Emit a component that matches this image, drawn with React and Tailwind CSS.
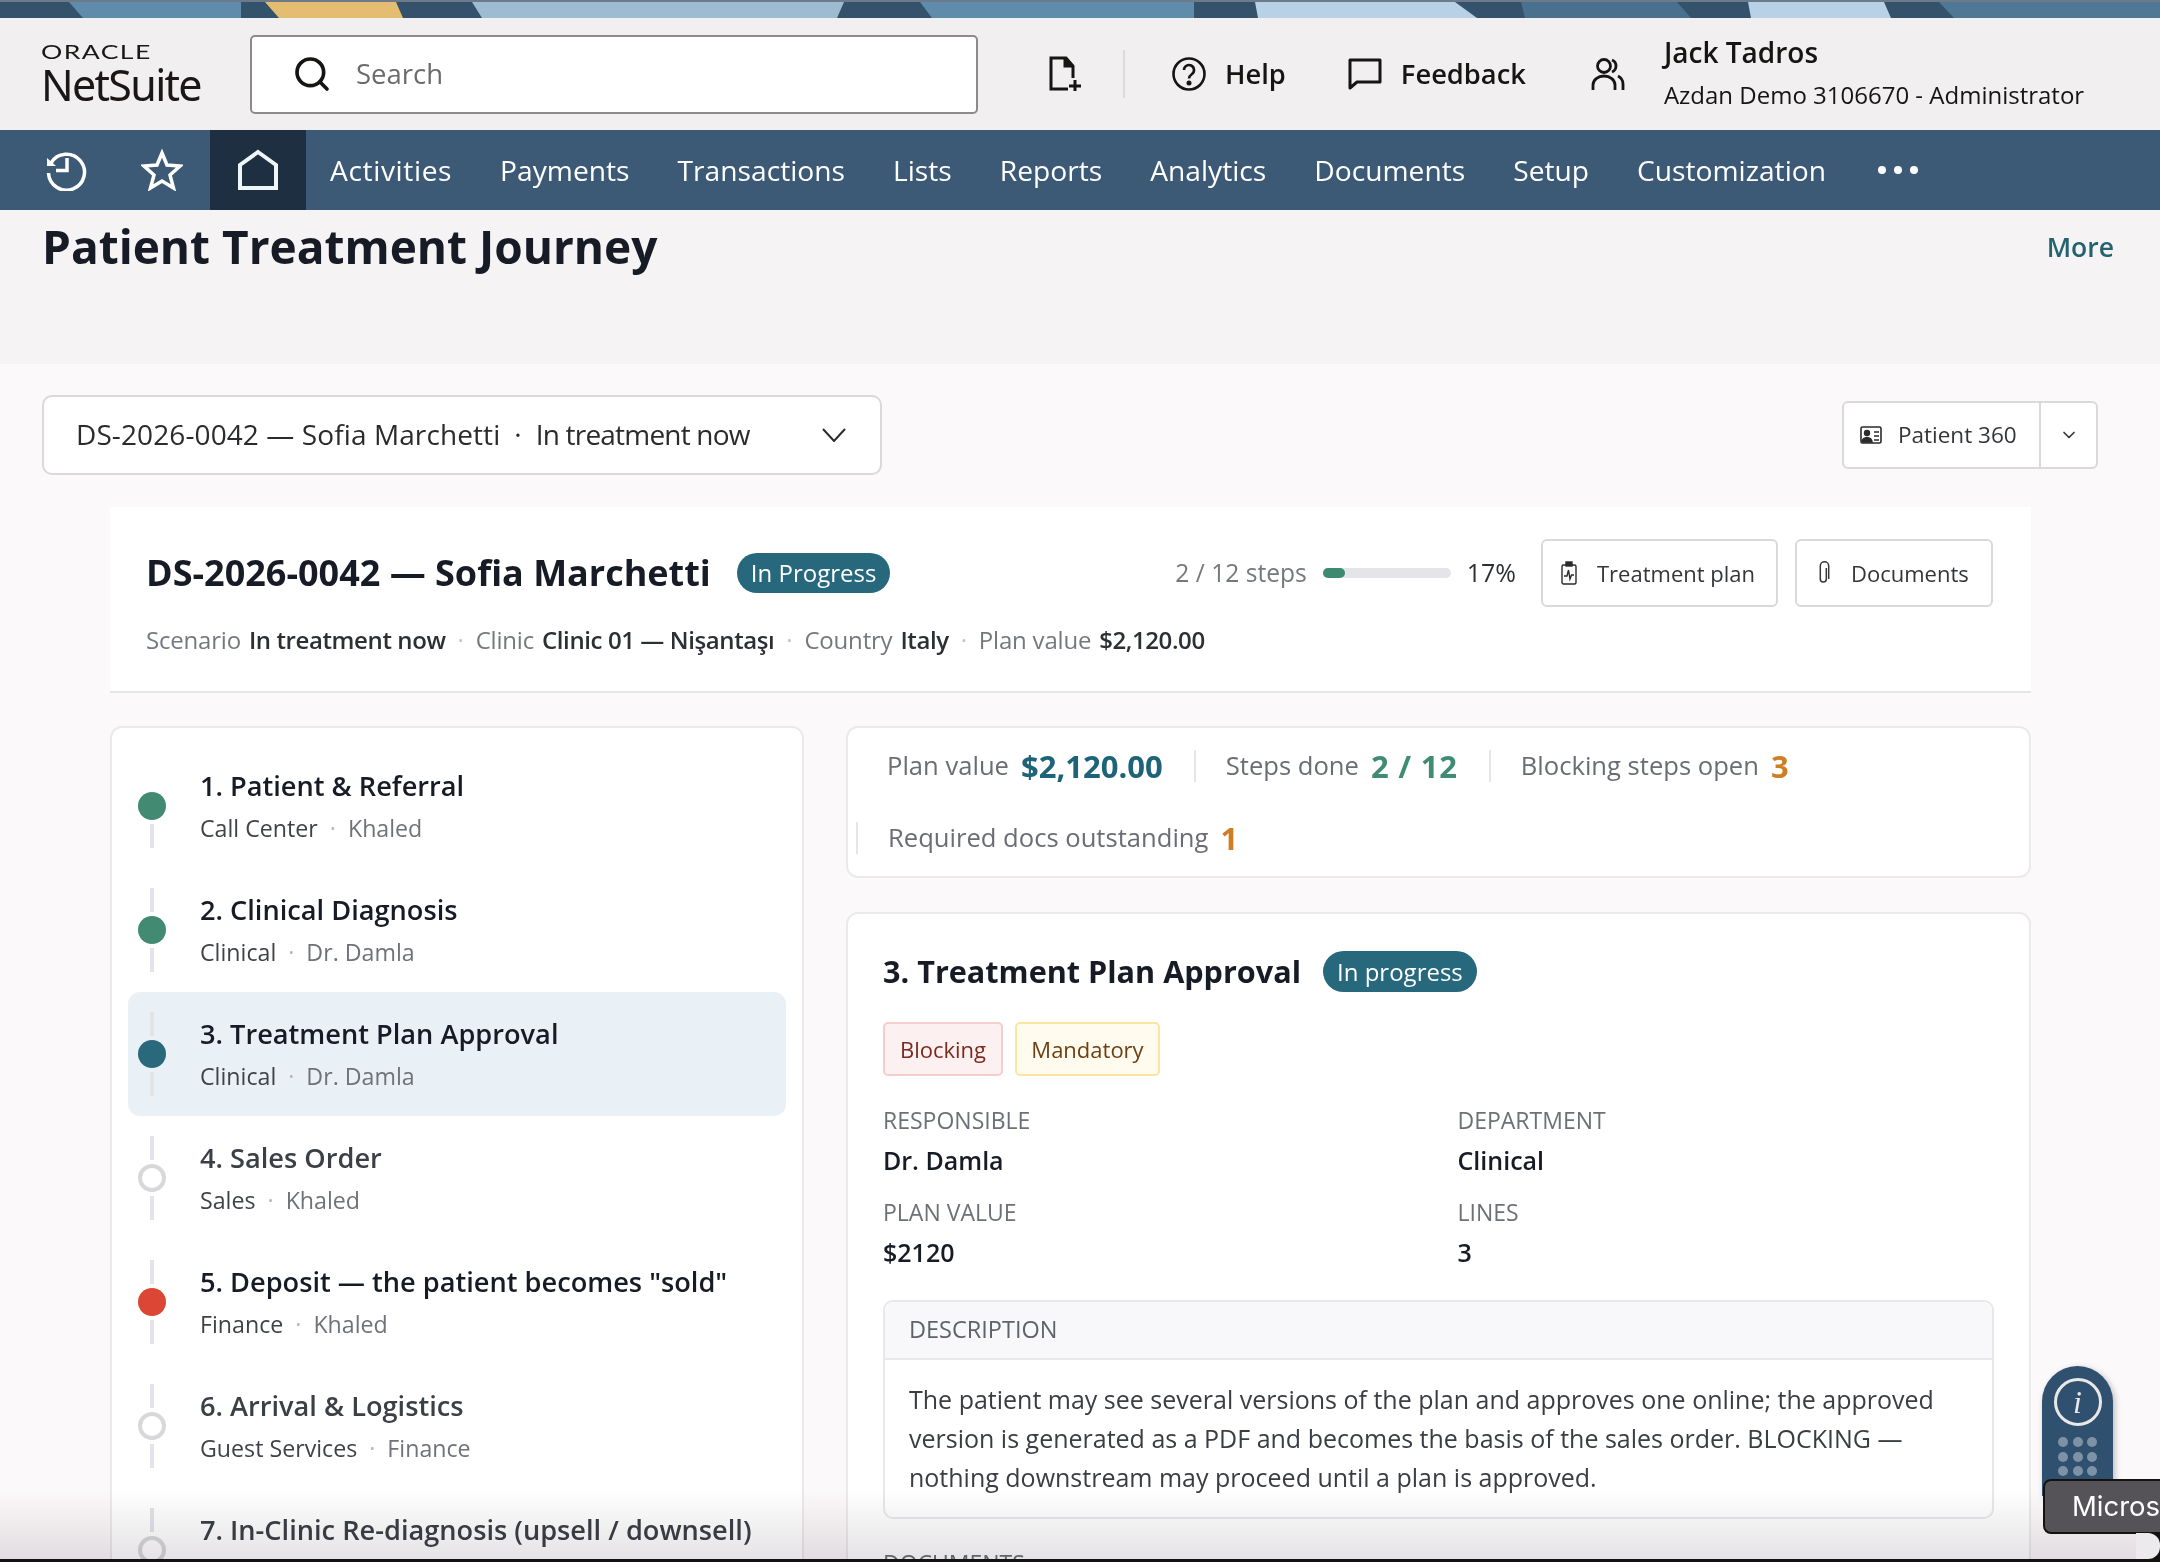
import React from 'react';
import { ChevronDown, Search } from 'lucide-react';

const navItems = ['Activities', 'Payments', 'Transactions', 'Lists', 'Reports', 'Analytics', 'Documents', 'Setup', 'Customization'];

const steps = [
    { title: '1. Patient & Referral', dept: 'Call Center', owner: 'Khaled', state: 'done' },
    { title: '2. Clinical Diagnosis', dept: 'Clinical', owner: 'Dr. Damla', state: 'done' },
    { title: '3. Treatment Plan Approval', dept: 'Clinical', owner: 'Dr. Damla', state: 'current' },
    { title: '4. Sales Order', dept: 'Sales', owner: 'Khaled', state: 'todo' },
    { title: '5. Deposit — the patient becomes "sold"', dept: 'Finance', owner: 'Khaled', state: 'blocked' },
    { title: '6. Arrival & Logistics', dept: 'Guest Services', owner: 'Finance', state: 'todo' },
    { title: '7. In-Clinic Re-diagnosis (upsell / downsell)', dept: 'Clinical', owner: 'Dr. Damla', state: 'todo' },
];

const dotClass = {
    done: 'bg-[#438a72]',
    current: 'bg-[#2a687c]',
    blocked: 'bg-[#dc4635]',
    todo: 'bg-white border-[4px] border-[#d8d8da]',
};

// decorative band above the header
function TopStrip() {
    return (
        <svg className="block w-full h-[18px]" viewBox="0 0 2160 18" preserveAspectRatio="none">
            <rect width="2160" height="18" fill="#34526b" />
            <polygon points="69,2 241,2 241,18 83,18" fill="#5f8cab" />
            <polygon points="265,2 396,2 403,18 279,18" fill="#e4bd72" />
            <polygon points="472,2 844,2 837,18 482,18" fill="#9dbcd2" />
            <polygon points="920,2 1194,2 1194,18 932,18" fill="#5f8cab" />
            <polygon points="1255,2 1455,2 1477,18 1258,18" fill="#b9d1e6" />
            <polygon points="1521,2 1677,2 1691,18 1525,18" fill="#4a7090" />
            <polygon points="1748,2 1884,2 1891,18 1751,18" fill="#b9d1e6" />
            <polygon points="1939,2 2160,2 2160,18 1954,18" fill="#4f7896" />
            <rect width="2160" height="2" fill="#6d7a8a" />
        </svg>
    );
}

function Logo() {
    return (
        <div className="w-[208px] shrink-0 text-[#1a1716]">
            <div className="text-[19px] leading-[16px] font-['Lato',sans-serif] tracking-[1px] scale-x-[1.4] origin-left">ORACLE</div>
            <div className="text-[43px] leading-[40px] mt-[5px] tracking-[-1.7px] font-['Noto_Sans',sans-serif]">NetSuite</div>
        </div>
    );
}

function HistoryIcon() {
    return (
        <svg width="42" height="42" viewBox="0 0 42 42" fill="none" stroke="white" strokeWidth="3.5">
            <path d="M6 14 A18 18 0 1 1 3.5 24" />
            <path d="M2 9 L11 17 L2 17 Z" fill="white" stroke="none" />
            <path d="M22 9 V21.5 H11" />
        </svg>
    );
}

function StarIcon() {
    return (
        <svg width="42" height="42" viewBox="0 0 42 42" fill="none" stroke="white" strokeWidth="3.5">
            <path d="M21 4 L26 16 L39 17 L29 26 L32.5 39 L21 32 L9.5 39 L13 26 L3 17 L16 16 Z" />
        </svg>
    );
}

function HomeIcon() {
    return (
        <svg width="42" height="42" viewBox="0 0 42 42" fill="none" stroke="#eef6fa" strokeWidth="4">
            <path d="M21 3 L39 16 V39 H3 V16 Z" />
        </svg>
    );
}

function NewDocIcon() {
    return (
        <svg width="34" height="36" viewBox="0 0 34 36" fill="none" stroke="#161513" strokeWidth="3">
            <path d="M20 33 H3 V2 H18 L25 10 V22" />
            <path d="M17 2 V10 H25" fill="#161513" />
            <path d="M27 24 V35 M21 30 H33" />
        </svg>
    );
}

function HelpIcon() {
    return (
        <svg width="34" height="34" viewBox="0 0 34 34" fill="none" stroke="#161513" strokeWidth="2.6">
            <circle cx="17" cy="17" r="15.5" />
            <path d="M12 13 a5 5 0 1 1 8 4 c-2 1.5 -3 2.5 -3 4.5" />
            <circle cx="17" cy="26" r="1.2" fill="#161513" />
        </svg>
    );
}

function FeedbackIcon() {
    return (
        <svg width="34" height="32" viewBox="0 0 34 32" fill="none" stroke="#161513" strokeWidth="3">
            <path d="M2 2 H32 V24 H9 L2 30 Z" strokeLinejoin="round" />
        </svg>
    );
}

function UserIcon() {
    return (
        <svg width="34" height="34" viewBox="0 0 34 34" fill="none" stroke="#161513" strokeWidth="2.8">
            <circle cx="13" cy="9" r="6.5" />
            <path d="M2 33 V28 a11 9 0 0 1 22 0 V33" />
            <path d="M21 3 a6.5 6.5 0 0 1 0 12" />
            <path d="M27 19 a9 9 0 0 1 5 8 V33" />
        </svg>
    );
}

function PatientCardIcon() {
    return (
        <svg width="22" height="18" viewBox="0 0 22 18" fill="none" stroke="#2b2b2b" strokeWidth="1.6">
            <rect x="1" y="1" width="20" height="16" rx="1.5" />
            <circle cx="7" cy="7" r="2.4" fill="#2b2b2b" />
            <path d="M2 16 a5 4.5 0 0 1 10 0 Z" fill="#2b2b2b" />
            <path d="M14 6 H19 M14 10 H19 M14 14 H19" />
        </svg>
    );
}

function ClipboardIcon() {
    return (
        <svg width="16" height="24" viewBox="0 0 16 24" fill="none" stroke="#2b2b2b" strokeWidth="1.4">
            <rect x="1" y="4" width="14" height="19" rx="1.5" />
            <rect x="5" y="1" width="6" height="4" fill="#2b2b2b" />
            <path d="M3 15 H6 L7.5 9 L9 18 L10.5 14 H13" />
        </svg>
    );
}

function ClipIcon() {
    return (
        <svg width="12" height="24" viewBox="0 0 12 24" fill="none" stroke="#333538" strokeWidth="1.5">
            <path d="M9 7 V18 a3 3 0 0 1 -6 0 V5 a4.2 4.2 0 0 1 8.4 0 V18" transform="translate(-0.7 0)" />
        </svg>
    );
}

function StepRow({ step, first }) {
    const muted = step.state === 'todo';
    return (
        <div className={`flex h-[124px] pl-[10px] rounded-[12px] ${step.state === 'current' ? 'bg-[#e9f1f7]' : ''}`}>
            <div className="w-[28px] shrink-0 flex flex-col items-center pt-[20px]">
                <div className={`w-[4px] h-[24px] ${first ? 'bg-transparent' : 'bg-[#e3e4e7]'}`} />
                <div className={`w-[28px] h-[28px] rounded-full mt-[4px] shrink-0 ${dotClass[step.state]}`} />
                <div className="w-[4px] h-[24px] mt-[4px] bg-[#e3e4e7]" />
            </div>
            <div className="ml-[34px] pt-[22px]">
                <div className={`text-[27.2px] leading-[40px] font-semibold whitespace-nowrap ${muted ? 'text-[#3b3f46]' : 'text-[#161b26]'}`}>{step.title}</div>
                <div className="mt-[5px] text-[23.2px] leading-[34px] text-[#3f4347] whitespace-nowrap">
                    {step.dept}
                    <span className="text-[#b5b6b8] mx-[12px]">·</span>
                    <span className="text-[#6f7278]">{step.owner}</span>
                </div>
            </div>
        </div>
    );
}

function Kpi({ label, value, color }) {
    return (
        <div className="h-[32px] flex items-center border-l-2 first:border-l-0 border-[#e6e6e8] pl-[30px] first:pl-[31px] pr-[31px]">
            <span className="text-[25.6px] text-[#6a6d73]">{label}</span>
            <span className={`ml-[12px] text-[31px] font-bold ${color}`}>{value}</span>
        </div>
    );
}

function Field({ label, value }) {
    return (
        <div>
            <div className="text-[23px] leading-[32px] text-[#6d7076]">{label}</div>
            <div className="mt-[6px] text-[25px] leading-[36px] font-semibold text-[#161b26]">{value}</div>
        </div>
    );
}

function MetaItem({ label, value, last }) {
    return (
        <>
            <span className="text-[#75787d]">{label}</span>
            <span className="ml-[8px] font-semibold tracking-[-0.4px] text-[#2c2f33]">{value}</span>
            {!last && <span className="text-[#c2c3c5] mx-[12px]">·</span>}
        </>
    );
}

export default function App() {
    return (
        <div className="relative w-[2160px] h-[1562px] overflow-hidden bg-[#fcf9fa] font-['Open_Sans',sans-serif]">
            <TopStrip />

            {/* Header */}
            <header className="h-[112px] bg-[#f1eff0] flex items-center pl-[41px]">
                <Logo />
                <div className="ml-px w-[728px] h-[79px] bg-white border-2 border-[#8c8a8c] rounded-[5px] flex items-center pl-[40px]">
                    <Search size={40} strokeWidth={2.2} className="text-[#161513]" />
                    <span className="ml-[24px] text-[27.5px] text-[#6b6b6d]">Search</span>
                </div>
                <div className="ml-[70px]"><NewDocIcon /></div>
                <div className="ml-[41px] w-[2px] h-[48px] bg-[#dcdadb]" />
                <div className="ml-[47px] flex items-center"><HelpIcon /><span className="ml-[19px] text-[27.3px] font-semibold text-[#161513]">Help</span></div>
                <div className="ml-[62px] flex items-center"><FeedbackIcon /><span className="ml-[19px] text-[27.3px] font-semibold text-[#161513]">Feedback</span></div>
                <div className="ml-[65px]"><UserIcon /></div>
                <div className="ml-[39px] text-[#161513]">
                    <div className="text-[28px] leading-[38px] font-semibold -mt-[3px]">Jack Tadros</div>
                    <div className="mt-[7px] text-[24px] leading-[34px]">Azdan Demo 3106670 - Administrator</div>
                </div>
            </header>

            {/* Nav */}
            <nav className="h-[80px] bg-[#3c5a75] flex items-center pl-[18px]">
                <div className="w-[96px] h-full flex items-center justify-center"><HistoryIcon /></div>
                <div className="w-[96px] h-full flex items-center justify-center"><StarIcon /></div>
                <div className="w-[96px] h-full flex items-center justify-center bg-[#1f2f42]"><HomeIcon /></div>
                <div className="ml-[24px] flex items-center gap-[48px] text-[28.2px] font-medium text-white">
                    {navItems.map((item) => (
                        <span key={item} className="first:tracking-[0.6px]">{item}</span>
                    ))}
                    <span className="flex gap-[8px] ml-[4px]">
                        <span className="w-[8px] h-[8px] rounded-full bg-white" />
                        <span className="w-[8px] h-[8px] rounded-full bg-white" />
                        <span className="w-[8px] h-[8px] rounded-full bg-white" />
                    </span>
                </div>
            </nav>

            {/* Page title */}
            <div className="h-[154px] bg-[#f5f3f3] flex justify-between items-start pl-[42px] pr-[46px] pt-[6px]">
                <h1 className="text-[46px] leading-[60px] font-bold text-[#161b26]">Patient Treatment Journey</h1>
                <a className="text-[26.5px] leading-[62px] font-semibold text-[#23626f]">More</a>
            </div>

            {/* Selector row */}
            <div className="pt-[31px] pl-[42px] pr-[62px] flex justify-between items-center">
                <div className="w-[840px] h-[80px] bg-white border-2 border-[#dbd8da] rounded-[10px] flex items-center justify-between pl-[32px] pr-[34px]">
                    <span className="text-[28px] text-[#2a2b2d] -mt-[2px]">
                        <span className="tracking-[0.1px]">DS-2026-0042 — Sofia Marchetti</span>
                        <span className="mx-[14px]">·</span>
                        <span className="tracking-[-0.8px]">In treatment now</span>
                    </span>
                    <svg width="24" height="14" viewBox="0 0 24 14" fill="none" stroke="#2a2b2d" strokeWidth="2"><path d="M1 1 L12 13 L23 1" /></svg>
                </div>
                <div className="w-[256px] h-[68px] bg-white border-2 border-[#dbd8da] rounded-[6px] flex items-center">
                    <div className="flex-1 h-full flex items-center pl-[16px] border-r-2 border-[#dbd8da]">
                        <PatientCardIcon />
                        <span className="ml-[16px] text-[22.5px] font-medium text-[#333538]">Patient 360</span>
                    </div>
                    <div className="w-[55px] flex justify-center"><ChevronDown size={20} strokeWidth={2} className="text-[#333538]" /></div>
                </div>
            </div>

            <div className="ml-[110px] w-[1921px]">
                {/* Case header */}
                <div className="mt-[32px] bg-white border-b-2 border-[#e6e5e7] pl-[36px] pr-[38px] pt-[32px] pb-[34px]">
                    <div className="h-[68px] flex items-center justify-between">
                        <div className="flex items-center">
                            <span className="text-[36px] font-bold text-[#161b26]">DS-2026-0042 — Sofia Marchetti</span>
                            <span className="ml-[26px] h-[40px] px-[14px] flex items-center rounded-full bg-[#27687c] text-white text-[24px] font-medium">In Progress</span>
                        </div>
                        <div className="flex items-center">
                            <span className="text-[24.6px] text-[#75787d]">2 / 12 steps</span>
                            <div className="ml-[16px] w-[128px] h-[10px] rounded-full bg-[#e4e4e9]">
                                <div className="h-full w-[22px] rounded-full bg-[#3c8a6f]" />
                            </div>
                            <span className="ml-[16px] text-[25px] font-medium text-[#2c2f33]">17%</span>
                            <div className="ml-[25px] w-[237px] h-[68px] border-2 border-[#dbd8da] rounded-[6px] flex items-center pl-[18px]">
                                <ClipboardIcon />
                                <span className="ml-[20px] text-[22px] font-medium text-[#333538]">Treatment plan</span>
                            </div>
                            <div className="ml-[17px] w-[198px] h-[68px] border-2 border-[#dbd8da] rounded-[6px] flex items-center pl-[21px]">
                                <ClipIcon />
                                <span className="ml-[21px] text-[22px] font-medium text-[#333538]">Documents</span>
                            </div>
                        </div>
                    </div>
                    <div className="mt-[16px] text-[24px] tracking-[-0.2px] leading-[34px] whitespace-nowrap">
                        <MetaItem label="Scenario" value="In treatment now" />
                        <MetaItem label="Clinic" value="Clinic 01 — Nişantaşı" />
                        <MetaItem label="Country" value="Italy" />
                        <MetaItem label="Plan value" value="$2,120.00" last />
                    </div>
                </div>

                <div className="mt-[33px] flex gap-[42px] items-start">
                    {/* Steps list */}
                    <div className="w-[694px] shrink-0 bg-white border-2 border-[#ece9ec] rounded-[12px] p-4">
                        {steps.map((step, i) => (
                            <StepRow key={step.title} step={step} first={i === 0} />
                        ))}
                    </div>

                    <div className="flex-1 min-w-0">
                        {/* KPIs */}
                        <div className="bg-white border-2 border-[#ece9ec] rounded-[12px] px-2 py-[22px] flex flex-wrap gap-y-[40px]">
                            <Kpi label="Plan value" value="$2,120.00" color="text-[#1e6478]" />
                            <Kpi label="Steps done" value="2 / 12" color="text-[#3f8c72] tracking-[0.8px]" />
                            <Kpi label="Blocking steps open" value="3" color="text-[#cf7e24]" />
                            <Kpi label="Required docs outstanding" value="1" color="text-[#cf7e24]" />
                        </div>

                        {/* Step detail */}
                        <div className="mt-[34px] bg-white border-2 border-[#ece9ec] rounded-[12px] px-[35px] pt-[37px] pb-8">
                            <div className="h-[41px] flex items-center">
                                <h2 className="text-[30.6px] font-bold text-[#161b26]">3. Treatment Plan Approval</h2>
                                <span className="ml-[22px] h-[41px] px-[14px] flex items-center rounded-full bg-[#27687c] text-white text-[24px] font-medium">In progress</span>
                            </div>
                            <div className="mt-[30px] flex gap-[12px]">
                                <span className="h-[54px] w-[120px] flex items-center justify-center rounded-[5px] border-2 border-[#f6cdcd] bg-[#fdf0f0] text-[22px] text-[#7a2a1e]">Blocking</span>
                                <span className="h-[54px] w-[145px] flex items-center justify-center rounded-[5px] border-2 border-[#fbe59f] bg-[#fffbef] text-[22px] text-[#6e3f12]">Mandatory</span>
                            </div>
                            <div className="mt-[28px] grid grid-cols-2 gap-x-[38px] gap-y-[18px]">
                                <Field label="RESPONSIBLE" value="Dr. Damla" />
                                <Field label="DEPARTMENT" value="Clinical" />
                                <Field label="PLAN VALUE" value="$2120" />
                                <Field label="LINES" value="3" />
                            </div>
                            <div className="mt-[30px] border-2 border-[#e8e8ec] rounded-[10px]">
                                <div className="h-[58px] flex items-center px-[24px] bg-[#f8f8fb] border-b-2 border-[#e8e8ec] rounded-t-[10px] text-[23.5px] font-medium text-[#5f6368]">DESCRIPTION</div>
                                <p className="px-[24px] py-[20px] text-[25px] leading-[39px] text-[#3a3d42]">
                                    The patient may see several versions of the plan and approves one online; the approved version is generated as a PDF and becomes the basis of the sales order. BLOCKING — nothing downstream may proceed until a plan is approved.
                                </p>
                            </div>
                            <div className="mt-[28px] text-[23px] leading-[32px] text-[#6d7076]">DOCUMENTS</div>
                        </div>
                    </div>
                </div>
            </div>

            {/* Bottom fade of the window */}
            <div className="absolute left-0 right-0 bottom-0 h-[72px] bg-gradient-to-b from-white to-[#e4e2e4] mix-blend-multiply pointer-events-none" />
            <div className="absolute left-0 right-0 bottom-0 h-[3px] bg-[#141210]" />

            {/* Floating widget */}
            <div className="absolute left-[2042px] top-[1366px] w-[71px] h-[130px] rounded-t-full bg-[#2f506e] shadow-[2px_2px_6px_rgba(0,0,0,0.25)] flex flex-col items-center pt-[12px]">
                <div className="w-[48px] h-[48px] rounded-full border-[3px] border-[#e8e8e8] flex items-center justify-center text-[#e8e8e8] text-[32px] italic font-['Liberation_Serif',serif]">i</div>
                <div className="mt-[11px] grid grid-cols-3 gap-x-[4.5px] gap-y-[4.5px]">
                    {[...Array(9)].map((_, i) => (
                        <span key={i} className="w-[10px] h-[10px] rounded-full bg-[#7e92a6]" />
                    ))}
                </div>
            </div>
            <div className="absolute left-[2043px] top-[1479px] w-[140px] h-[55px] rounded-[8px] border-2 border-[#141210] bg-[#555357] pl-[27px] flex items-center text-[27.5px] text-white font-['Inter',sans-serif] whitespace-nowrap">Microsoft</div>

            {/* Rounded window corner under the tooltip */}
            <div className="absolute left-[2136px] top-[1533px] w-[24px] h-[26px] bg-[#141210]">
                <div className="w-full h-full rounded-r-[12px] bg-[#eceaec]" />
            </div>
        </div>
    );
}
